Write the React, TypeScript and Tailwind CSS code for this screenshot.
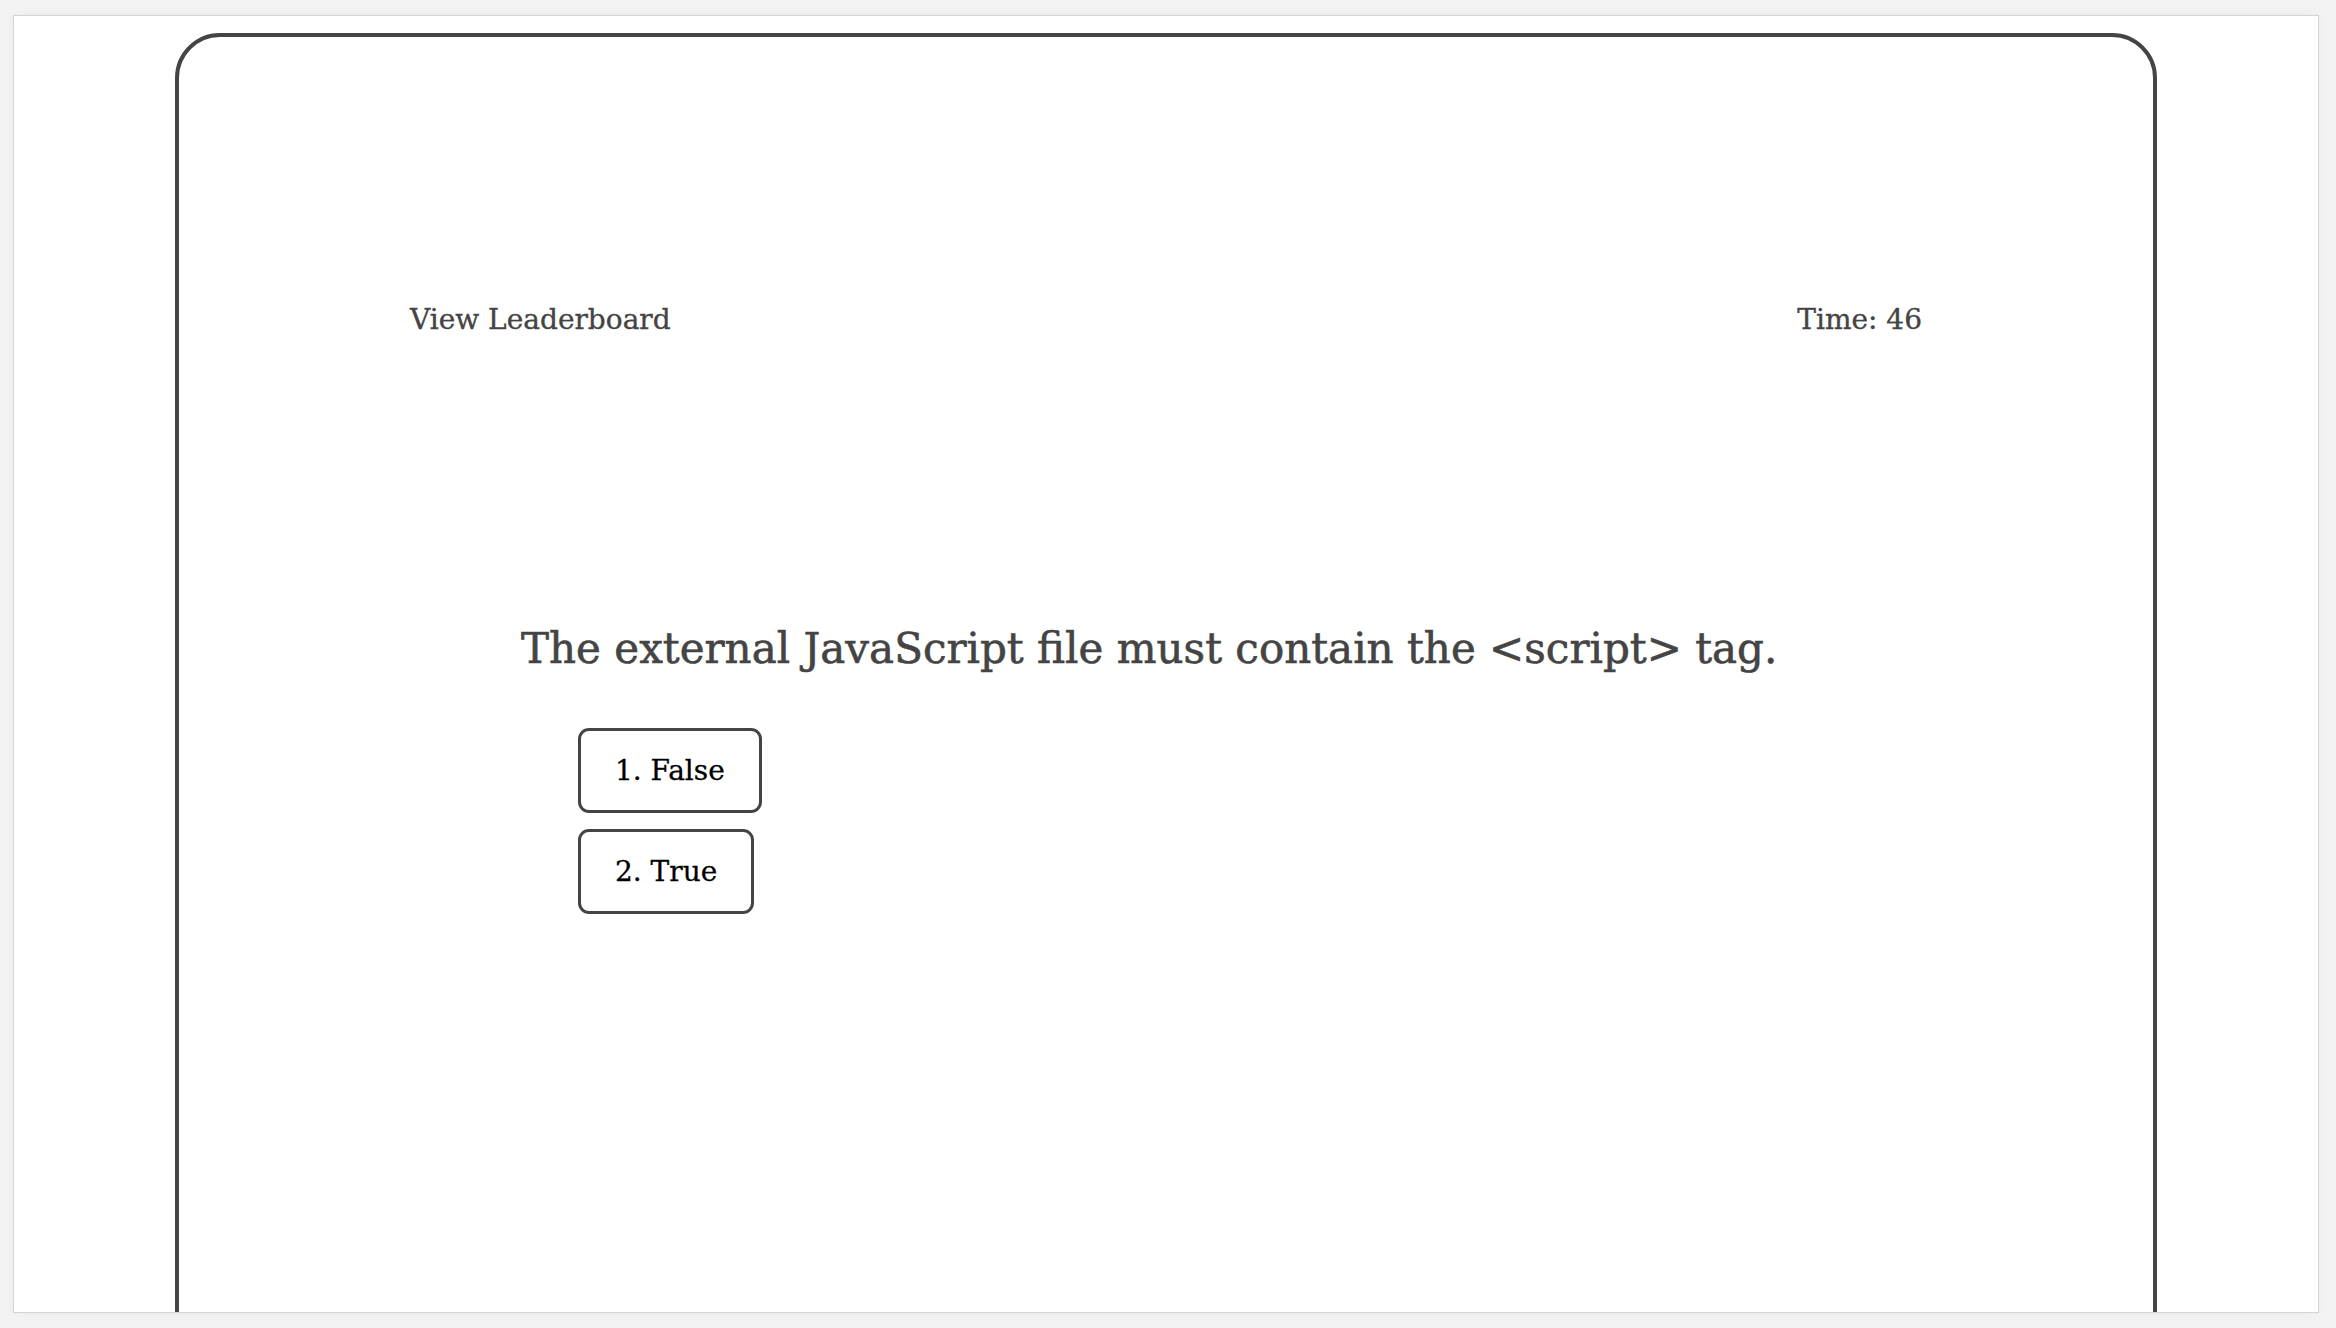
import React from "react";

export default function App() {
  const serif = { fontFamily: '"DejaVu Serif", "Liberation Serif", serif' };
  return (
    <div className="w-[2336px] h-[1328px] bg-[#f3f3f3] overflow-hidden" style={serif}>
      <div className="ml-[13px] mt-[15px] w-[2306px] h-[1298px] bg-white border border-[#d4d4d4] overflow-hidden shadow-[0_0_12px_rgba(0,0,0,0.04)]">
        <div className="ml-[161px] mt-[17px] w-[1982px] h-[1400px] border-[4px] border-[#444444] rounded-[45px] bg-white">
          <div className="flex justify-between px-[231px] pt-[267px] text-[28px] leading-[32px] text-[#444444] [-webkit-text-stroke:0.35px_#444444]">
            <span>View Leaderboard</span>
            <span>Time: 46</span>
          </div>
          <h1 className="pl-[342px] mt-[288px] text-[42px] leading-[49px] text-[#444444] font-normal [-webkit-text-stroke:0.6px_#444444]">
            The external JavaScript file must contain the &lt;script&gt; tag.
          </h1>
          <div className="pl-[399px] mt-[55px] flex flex-col items-start gap-[16px]">
            <button className="h-[85px] px-[34px] border-[3px] border-[#444444] rounded-[11px] text-[28px] leading-[32px] text-black bg-white [-webkit-text-stroke:0.3px_#000000]">
              1. False
            </button>
            <button className="h-[85px] px-[34px] border-[3px] border-[#444444] rounded-[11px] text-[28px] leading-[32px] text-black bg-white [-webkit-text-stroke:0.3px_#000000]">
              2. True
            </button>
          </div>
        </div>
      </div>
    </div>
  );
}
